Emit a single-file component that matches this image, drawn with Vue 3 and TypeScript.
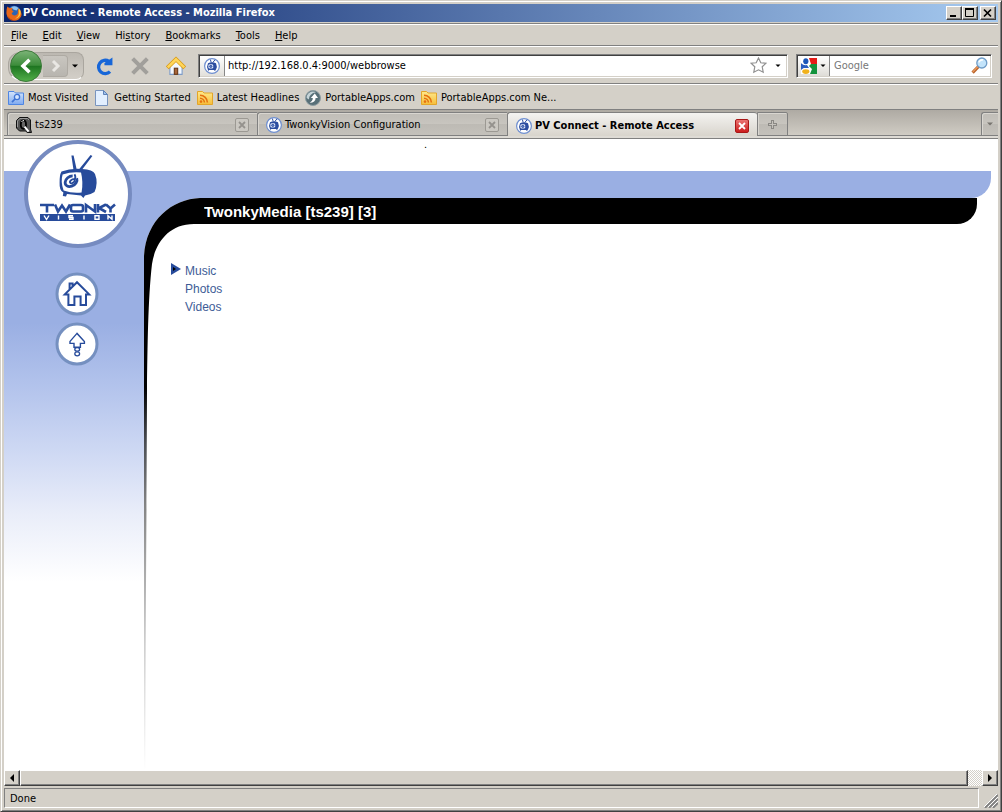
<script setup lang="ts">
import { ref } from 'vue'

interface MenuItem { before: string; key: string; after: string }
interface Bookmark { label: string; icon: string }
interface Tab { label: string; icon: string; active: boolean }

const menus: MenuItem[] = [
  { before: '', key: 'F', after: 'ile' },
  { before: '', key: 'E', after: 'dit' },
  { before: '', key: 'V', after: 'iew' },
  { before: 'Hi', key: 's', after: 'tory' },
  { before: '', key: 'B', after: 'ookmarks' },
  { before: '', key: 'T', after: 'ools' },
  { before: '', key: 'H', after: 'elp' },
]

const bookmarks: Bookmark[] = [
  { label: 'Most Visited', icon: 'i-smart' },
  { label: 'Getting Started', icon: 'i-page' },
  { label: 'Latest Headlines', icon: 'i-feed' },
  { label: 'PortableApps.com', icon: 'i-portable' },
  { label: 'PortableApps.com Ne...', icon: 'i-feed' },
]

const tabs: Tab[] = [
  { label: 'ts239', icon: 'i-qnap', active: false },
  { label: 'TwonkyVision Configuration', icon: 'i-tv', active: false },
  { label: 'PV Connect - Remote Access', icon: 'i-tv', active: true },
]

const entries: string[] = ['Music', 'Photos', 'Videos']

const address = ref('http://192.168.0.4:9000/webbrowse')
const query = ref('')
</script>

<template>
  <div class="window">
    <svg class="defs" aria-hidden="true">
      <defs>
        <linearGradient id="g-green" x1="0" y1="0" x2="0" y2="1">
          <stop offset="0" stop-color="#7cb478" />
          <stop offset="0.48" stop-color="#3c8c3a" />
          <stop offset="0.5" stop-color="#1d7420" />
          <stop offset="1" stop-color="#53b04a" />
        </linearGradient>
        <linearGradient id="g-folder" x1="0" y1="0" x2="0" y2="1">
          <stop offset="0" stop-color="#ffe98c" />
          <stop offset="1" stop-color="#f5bd3a" />
        </linearGradient>
        <linearGradient id="g-blue" x1="0" y1="0" x2="0" y2="1">
          <stop offset="0" stop-color="#d5e5fb" />
          <stop offset="1" stop-color="#7faaf0" />
        </linearGradient>
        <linearGradient id="g-fade" gradientUnits="userSpaceOnUse" x1="0" y1="0" x2="0" y2="572">
          <stop offset="0" stop-color="#000" />
          <stop offset="0.33" stop-color="#000" />
          <stop offset="0.43" stop-color="#4c4f54" />
          <stop offset="0.54" stop-color="#858585" />
          <stop offset="0.66" stop-color="#acacac" />
          <stop offset="0.78" stop-color="#cecece" />
          <stop offset="0.9" stop-color="#e8e8e8" />
          <stop offset="1" stop-color="#fff" />
        </linearGradient>
      </defs>
      <symbol id="i-tv" viewBox="0 0 16 16">
        <circle cx="8" cy="8" r="7.4" fill="#fff" stroke="#6f8fd0" stroke-width="1.2" />
        <path d="M7.2 4.5L6.4 1.6M8.8 4.5L11 1.8" stroke="#2c4da0" stroke-width="1" />
        <path d="M4 5.2Q8 3.4 12 5.2Q13.6 8.5 12 11.6L11 13L9.8 12H5.2L4.4 13L3.8 11.6Q2.4 8.5 4 5.2z" fill="#2c4da0" />
        <rect x="4.4" y="6.2" width="4.8" height="4.4" rx="1.4" fill="#dfe8fa" />
        <ellipse cx="6.8" cy="8.4" rx="1.2" ry="1" fill="#6f8fd0" stroke="#2c4da0" stroke-width="1" />
      </symbol>
      <symbol id="i-smart" viewBox="0 0 16 16">
        <path d="M.5 14.5V1.5H6L7.5 3H15.5V14.5z" fill="url(#g-blue)" stroke="#4f86e2" />
        <circle cx="9" cy="7" r="2.6" fill="#d5e6ff" stroke="#3f74d4" stroke-width="1.3" />
        <path d="M7 9L4 12.2" stroke="#3f74d4" stroke-width="1.7" />
      </symbol>
      <symbol id="i-page" viewBox="0 0 16 16">
        <path d="M1.5 .5H9.5L13.5 4.5V15.5H1.5z" fill="#e2efff" stroke="#7894be" />
        <path d="M9.5 .5V4.5H13.5z" fill="#9fc2ef" stroke="#5f83b8" />
      </symbol>
      <symbol id="i-feed" viewBox="0 0 16 16">
        <path d="M.5 14.5V1.5H5.5L7 3H15.5V14.5z" fill="url(#g-folder)" stroke="#e3a529" />
        <circle cx="4" cy="11.6" r="1.3" fill="#e56f10" />
        <path d="M3 8.2A4.4 4.4 0 0 1 7.4 12.6M3 5.2A7.4 7.4 0 0 1 10.4 12.6" fill="none" stroke="#e56f10" stroke-width="1.5" />
      </symbol>
      <symbol id="i-portable" viewBox="0 0 16 16">
        <circle cx="8" cy="8" r="7.5" fill="#587078" stroke="#8d9da2" />
        <path d="M1.6 8A6.4 6.4 0 0 1 11 2.2A8 8 0 0 0 5.6 5A6 6 0 0 0 4 9.6z" fill="#c6d4d8" />
        <path d="M4.6 12.8Q10.6 12.6 10.6 8H13L9.8 3.6L5.8 8H7.8Q7.8 11 4.6 12.8z" fill="#fff" />
      </symbol>
      <symbol id="i-qnap" viewBox="0 0 16 16">
        <path d="M3.5.5H12L14.5 3V12L15.5 15.5H11L9.8 14H3.5L.5 11V3.5z" fill="#555" stroke="#111" />
        <path d="M1.5 10V4L4 1.5H11.5L13 3" stroke="#999" fill="none" />
        <ellipse cx="7.4" cy="7.6" rx="2.6" ry="4.2" fill="#666" stroke="#000" stroke-width="1.8" />
        <path d="M8.6 9.6L12.6 14.6" stroke="#fff" stroke-width="1.9" />
        <path d="M5.4 5Q6.4 3.4 8 3.4" stroke="#ddd" fill="none" />
      </symbol>
    </svg>

    <header class="titlebar">
      <svg class="fox" viewBox="0 0 16 16" aria-hidden="true">
        <circle cx="8" cy="7.8" r="7" fill="#2c64b4" />
        <path d="M5 2.5Q9 0 12.5 3L10.5 5.5L7.4 4.6z" fill="#8fc3ef" />
        <path d="M1.4 1.6Q2.6 3 4 3.2Q5.4 2.6 6.6 3L5.8 5L7.6 6.4L5.6 8.2Q6.4 10.6 9 10.4Q12.4 9.6 11.8 6.2L12.6 3.2Q16.6 7 15.2 11.2Q12.8 15.8 8 15.8Q1.6 15.4.5 9Q.1 5 1.4 1.6z" fill="#e8681a" />
        <path d="M12.6 3.2Q15.2 5.4 14.6 9Q13.4 13.4 9 13.6Q13 11.6 12.9 8z" fill="#ffc43a" />
        <path d="M1.2 10Q4 15.6 9.4 15.4Q3.4 16.4 1.2 10z" fill="#9a2c10" />
      </svg>
      <h1>PV Connect - Remote Access - Mozilla Firefox</h1>
      <div class="winbtns">
        <button type="button" aria-label="Minimize"><svg viewBox="0 0 12 10"><path d="M2 8H8" stroke="#000" stroke-width="2" /></svg></button>
        <button type="button" aria-label="Maximize"><svg viewBox="0 0 12 10"><path d="M1.5 1V8.5H9.5V1" fill="none" stroke="#000" /><path d="M1 1H10" stroke="#000" stroke-width="2" /></svg></button>
        <button type="button" class="close" aria-label="Close"><svg viewBox="0 0 12 10"><path d="M2 1.5L9 8.5M9 1.5L2 8.5" stroke="#000" stroke-width="1.7" /></svg></button>
      </div>
    </header>

    <nav class="menubar" aria-label="Menu">
      <button v-for="m in menus" :key="m.key + m.after" type="button">{{ m.before }}<u>{{ m.key }}</u>{{ m.after }}</button>
    </nav>

    <div class="navbar">
      <div class="pill">
        <button type="button" class="back" aria-label="Back">
          <svg viewBox="0 0 34 34">
            <circle cx="17" cy="17" r="15.5" fill="url(#g-green)" stroke="#3d7a3b" />
            <path d="M20.5 10.8L14 17L20.5 23.2" fill="none" stroke="#fff" stroke-width="3.6" />
          </svg>
        </button>
        <button type="button" class="forward" aria-label="Forward">
          <svg viewBox="0 0 24 20"><path d="M10 5L15 10L10 15" fill="none" stroke="#e9e7e3" stroke-width="3" /></svg>
        </button>
        <button type="button" class="recent" aria-label="Recent pages">
          <svg viewBox="0 0 6 4"><path d="M0 .5H6L3 3.5z" /></svg>
        </button>
      </div>
      <button type="button" class="tool" aria-label="Reload">
        <svg viewBox="0 0 18 18"><path d="M14.4 14A6 6 0 1 1 13.4 4.8" fill="none" stroke="#1766d8" stroke-width="3" /><path d="M16.6 1.4V8.4H9.4V6.4z" fill="#1766d8" /></svg>
      </button>
      <button type="button" class="tool" aria-label="Stop">
        <svg viewBox="0 0 18 18"><path d="M2.4 2.4L15.6 15.6M15.6 2.4L2.4 15.6" stroke="#a19f9b" stroke-width="3.6" /></svg>
      </button>
      <button type="button" class="tool" aria-label="Home">
        <svg viewBox="0 0 18 18">
          <path d="M3.5 9V16.5H14.5V9L9 4z" fill="#f3f8ff" stroke="#7e9cc8" />
          <rect x="7.5" y="11" width="3" height="5.5" fill="#a8653a" stroke="#6b3b1a" />
          <path d="M1.2 10.6L9 3L16.8 10.6" fill="none" stroke="#d89a18" stroke-width="3.6" />
          <path d="M1.6 10.2L9 3L16.4 10.2" fill="none" stroke="#ffd65a" stroke-width="2.4" />
        </svg>
      </button>
      <div class="field url">
        <button type="button" class="ident" aria-label="Site identity"><svg class="i16"><use href="#i-tv" /></svg></button>
        <input v-model="address" type="text" aria-label="Location">
        <button type="button" class="star" aria-label="Bookmark this page">
          <svg viewBox="0 0 17 17"><path d="M8.5 1L10.8 5.8L16 6.2L12.2 9.8L13.2 15.2L8.5 12.8L3.8 15.2L4.8 9.8L1 6.2L6.2 5.8z" fill="#fff" stroke="#8f8f8f" stroke-width="1.2" /></svg>
        </button>
        <button type="button" class="drop" aria-label="Show history"><svg viewBox="0 0 6 4"><path d="M.5 .5H5.5L3 3z" /></svg></button>
      </div>
      <div class="field search">
        <button type="button" class="engine" aria-label="Search engine">
          <svg class="i16" viewBox="0 0 16 16">
            <rect width="16" height="16" fill="#fff" />
            <path d="M8 0H16V6H10z" fill="#e41b17" />
            <path d="M0 5L4 9L0 12z" fill="#2a5fc0" />
            <path d="M10 6H16V16H9L11 11L8 8z" fill="#12923c" />
            <ellipse cx="4.8" cy="3.2" rx="2.6" ry="3" fill="#1b57b8" />
            <ellipse cx="4.8" cy="13.6" rx="3.6" ry="2.4" fill="#f0b11c" />
            <path d="M0 6Q3 7.5 6 7L8 10H2z" fill="#2a5fc0" />
          </svg>
          <svg class="caret" viewBox="0 0 6 4"><path d="M.5 .5H5.5L3 3z" /></svg>
        </button>
        <input v-model="query" type="text" placeholder="Google" aria-label="Search">
        <button type="button" class="go" aria-label="Go">
          <svg viewBox="0 0 17 17">
            <path d="M8 9L1.6 15.6" stroke="#b8622a" stroke-width="3.2" />
            <path d="M7.4 9.2L1.8 14.8" stroke="#f0a060" stroke-width="1.2" />
            <circle cx="10.8" cy="6" r="5" fill="#c3e4fb" stroke="#6f9cc8" stroke-width="1.3" />
            <path d="M8 5.4A3.2 3.2 0 0 1 12 3" fill="none" stroke="#fff" stroke-width="1.6" />
          </svg>
        </button>
      </div>
    </div>

    <nav class="bookmarks" aria-label="Bookmarks">
      <a v-for="b in bookmarks" :key="b.label" href="#"><svg class="i16" aria-hidden="true"><use :href="'#' + b.icon" /></svg>{{ b.label }}</a>
    </nav>

    <div class="tabbar">
      <div v-for="t in tabs" :key="t.label" class="tab" :class="{ active: t.active }">
        <button type="button" class="label"><svg class="i16" aria-hidden="true"><use :href="'#' + t.icon" /></svg>{{ t.label }}</button>
        <button type="button" class="x" :aria-label="'Close ' + t.label"><svg viewBox="0 0 8 8"><path d="M1 1L7 7M7 1L1 7" stroke-width="1.8" /></svg></button>
      </div>
      <button type="button" class="tab plus" aria-label="New tab"><svg viewBox="0 0 9 9"><path d="M4.5 0V9M0 4.5H9" stroke="#8a8884" stroke-width="3" /><path d="M4.5 1V8M1 4.5H8" stroke="#c6c3bd" /></svg></button>
      <button type="button" class="tab all" aria-label="List all tabs"><svg viewBox="0 0 6 4"><path d="M0 .5H6L3 3.5z" fill="#77746f" /></svg></button>
    </div>

    <div class="page">
      <div class="strip">.</div>
      <div class="band"></div>
      <a class="logo" href="#" aria-label="Twonky Vision">
        <svg viewBox="0 0 108 108">
          <circle cx="54" cy="54" r="52" fill="#fff" stroke="#768bc0" stroke-width="4" />
          <path d="M49.5 30L47.4 15.5H49.6L52.8 30zM54.5 30L66.6 15L68.4 16L57.8 30z" fill="#274b9b" />
          <path d="M37.5 31.5Q47 28 58 29Q69 29.5 71 34Q74.5 43 70.5 52Q66 55 61 55.6L59.4 58L57 55.6L43 54L42 56.6L38.8 56L39.4 52.6Q35.2 50.5 35.6 43Q35.4 35 37.5 31.5z" fill="#274b9b" />
          <path d="M38.6 34.6Q47 31.4 57 32.4Q59.4 42 57.6 52.4Q48 53.4 39.6 50.4Q36.4 42 38.6 34.6z" fill="#fff" />
          <g transform="rotate(-35 47.5 42)" fill="none" stroke="#274b9b">
            <path d="M52 37.6A6.4 4.8 0 1 0 53.9 42" stroke-width="2.8" />
            <ellipse cx="48.6" cy="41.8" rx="2.6" ry="1.6" stroke-width="1.8" />
            <path d="M51.4 41.8Q54 41 54.4 37.4" stroke-width="1.8" />
          </g>
          <rect x="16" y="74" width="75" height="7" fill="#274b9b" />
          <g fill="none" stroke="#274b9b" stroke-width="2.6">
            <path d="M16 65H30M23 65V72.5M31 64.5L34 71.5L38 65.5L42 71.5L46 64.5M49 65H57Q59 65 59 67V69.5Q59 71.5 57 71.5H49Q47 71.5 47 69.5V67Q47 65 49 65zM62 72.5V65L71 71.5V64M74 64V72.5M82 64.5L75 68L82 72M82 64.5L86.5 68.5L91 64.5M86.5 68.5V72.5" />
            <path stroke="#fff" stroke-width="1.4" d="M20 75.5L22.5 79.5L25 75.5M34.5 75.5V79.5M49 75.7H45V77.5H49V79.3H45M60 75.5V79.5M71 75.7H75V79.3H71zM84 79.5V75.7L88 79.3V75.5" />
          </g>
        </svg>
      </a>
      <div class="body">
        <aside>
          <a href="#" aria-label="Home">
            <svg viewBox="0 0 44 44">
              <circle cx="22" cy="22" r="20" fill="#fff" stroke="#7590c0" stroke-width="3" />
              <path d="M9.8 22.4L22 10.2L34.2 22.4H31V33H25.6V24.6H19.4V33H13.4V22.4zM14.6 17V11.5H17.6V14.2" fill="#fff" stroke="#274b9b" stroke-width="2" />
            </svg>
          </a>
          <a href="#" aria-label="Up">
            <svg viewBox="0 0 44 44">
              <circle cx="22" cy="22" r="20" fill="#fff" stroke="#7590c0" stroke-width="3" />
              <path d="M22 11.4L15 19.4V21.4H19V25.2H25.4V21.4H29.4V19.4z" fill="#fff" stroke="#274b9b" stroke-width="1.4" />
              <ellipse cx="22.2" cy="27.4" rx="2.4" ry="1.7" fill="#fff" stroke="#274b9b" stroke-width="1.3" />
              <ellipse cx="22.2" cy="31.8" rx="2.4" ry="2" fill="#fff" stroke="#274b9b" stroke-width="1.3" />
            </svg>
          </a>
        </aside>
        <main>
          <svg class="swoosh" viewBox="0 0 60 572" aria-hidden="true">
            <path d="M0 0H56C28 1 2 22 0 58z" fill="#9aafe3" />
            <path d="M60 0H56C28 1 2 22 0 58V572H1.5C1.5 420 3 260 3 190C3.5 150 4 100 8 66C11 46 24 26 50 26H60z" fill="url(#g-fade)" />
          </svg>
          <h2>TwonkyMedia [ts239] [3]</h2>
          <ul>
            <li v-for="(e, i) in entries" :key="e">
              <svg v-if="i === 0" viewBox="0 0 10 12" aria-hidden="true"><path d="M0 0L10 6L0 12z" fill="#274b9b" /><path d="M2 4L5 6L2 8z" fill="#000" /></svg>
              <a href="#">{{ e }}</a>
            </li>
          </ul>
        </main>
      </div>
    </div>

    <div class="hscroll">
      <button type="button" aria-label="Scroll left"><svg viewBox="0 0 4 8"><path d="M4 0V8L0 4z" /></svg></button>
      <div class="thumb"></div>
      <div class="track"></div>
      <button type="button" aria-label="Scroll right"><svg viewBox="0 0 4 8"><path d="M0 0V8L4 4z" /></svg></button>
    </div>

    <footer class="status">
      <span>Done</span>
      <svg viewBox="0 0 14 14" aria-hidden="true"><path d="M1 14L14 1M5 14L14 5M9 14L14 9" stroke="#808080" stroke-width="1.8" /><path d="M0 13L13 0M4 13L14 3M8 13L14 7" stroke="#fff" /></svg>
    </footer>
  </div>
</template>

<style>
html, body { height: 100%; margin: 0; overflow: hidden; }
</style>

<style scoped>
* { box-sizing: border-box; }
button, input { font: inherit; color: inherit; border: 0; padding: 0; margin: 0; background: none; outline: 0; }
svg { display: block; }
a { text-decoration: none; color: inherit; }
.defs { position: absolute; width: 0; height: 0; }
.i16 { width: 16px; height: 16px; flex: none; }

.window {
  display: flex;
  flex-direction: column;
  height: 100vh;
  padding: 3px;
  border: 1px solid;
  border-color: #d4d0c8 #404040 #404040 #d4d0c8;
  box-shadow: inset 1px 1px #fff, inset -1px -1px #808080;
  background: #d4d0c8;
  color: #000;
  font-family: "DejaVu Sans Condensed", "DejaVu Sans", sans-serif;
  font-size: 11px;
  line-height: 14px;
}

.titlebar {
  display: flex;
  align-items: center;
  flex: none;
  height: 18px;
  padding: 0 2px;
  background: linear-gradient(90deg, #0a246a, #a6caf0);
  color: #fff;
}
.fox { width: 16px; height: 16px; }
.titlebar h1 { flex: 1; margin: 0 0 0 1px; font-size: 11px; font-weight: bold; }
.winbtns { display: flex; }
.winbtns button { width: 16px; height: 14px; padding: 1px; }
.winbtns svg { width: 12px; height: 10px; }
.winbtns .close { margin-left: 2px; }
.winbtns button, .hscroll button, .thumb {
  background: #d4d0c8;
  border: 1px solid;
  border-color: #fff #404040 #404040 #fff;
  box-shadow: inset -1px -1px #808080;
}

.menubar {
  display: flex;
  align-items: center;
  flex: none;
  gap: 15px;
  height: 23px;
  margin-top: 1px;
  padding: 2px 7px 0;
  border-top: 1px solid #808080;
  border-bottom: 1px solid #808080;
  box-shadow: inset 0 1px #fff;
}

.navbar {
  display: flex;
  align-items: center;
  flex: none;
  height: 38px;
  padding: 2px 6px 0 4px;
  border-bottom: 1px solid #808080;
  box-shadow: inset 0 1px #fff;
}
.pill {
  display: flex;
  align-items: center;
  width: 76px;
  height: 28px;
  margin-right: 10px;
  border: 1px solid #aaa69f;
  border-bottom-color: #fff;
  border-radius: 12px 8px 8px 12px;
  background: linear-gradient(#bcb8b1, #d3cfc8);
}
.back { width: 34px; height: 34px; flex: none; }
.back svg { width: 34px; height: 34px; }
.forward { width: 25px; height: 22px; border: 1px solid #aeaaa3; border-left: 0; border-radius: 0 4px 4px 0; background: linear-gradient(#c9c6c0, #b8b5af); }
.forward svg { width: 24px; height: 20px; }
.recent { padding: 8px 4px; }
.recent svg { width: 6px; height: 4px; }
.tool { width: 20px; height: 20px; margin-right: 16px; }
.tool svg { width: 20px; height: 20px; }
.field {
  display: flex;
  align-items: center;
  height: 24px;
  padding: 1px;
  background: #fff;
  border: 1px solid;
  border-color: #808080 #fff #fff #808080;
  box-shadow: inset 1px 1px #404040, inset -1px -1px #d4d0c8;
}
.field input { flex: 1; min-width: 0; height: 20px; padding: 0 4px; }
.field input::placeholder { color: #777; opacity: 1; }
.url { flex: 1; margin-left: -4px; }
.ident { display: grid; place-items: center; width: 25px; height: 20px; border-right: 1px solid #888; background: linear-gradient(#fff, #e2e0db); }
.url input { padding-left: 3px; }
.star svg { width: 17px; height: 17px; }
.drop { margin-left: 3px; padding: 6px 5px; }
.drop svg, .caret { width: 6px; height: 4px; }
.search { flex: 0 1 196px; margin-left: 8px; }
.engine { display: flex; align-items: center; gap: 3px; height: 20px; padding: 0 3px; border-right: 1px solid #888; background: linear-gradient(#fff, #dedcd7); }
.go { margin-right: 2px; }
.go svg { width: 17px; height: 17px; }

.bookmarks {
  display: flex;
  align-items: center;
  flex: none;
  gap: 6px;
  height: 26px;
  padding: 2px 4px 0;
  border-bottom: 1px solid #808080;
  box-shadow: inset 0 1px #fff;
}
.bookmarks a { display: flex; align-items: center; gap: 4px; white-space: nowrap; }

.tabbar {
  display: flex;
  align-items: flex-end;
  flex: none;
  height: 29px;
  padding: 3px 0 2px 3px;
  border-bottom: 1px solid #808080;
  background: linear-gradient(#aeaaa3, #d0ccc4 25px, #808080 25px, #808080 26px, #dedbd5 26px);
}
.tab {
  display: flex;
  align-items: center;
  width: 250px;
  height: 24px;
  padding: 2px 8px 0;
  border: 1px solid #808080;
  border-right-width: 0;
  border-radius: 3px 0 0 0;
  background: linear-gradient(#c0bdb7, #c8c5bf 50%, #bdbab4 50%, #c4c1bb);
  box-shadow: inset 1px 1px #d9d6d0;
}
.tab.active { border-bottom: 0; background: linear-gradient(#f4f3f1, #d8d4cc); font-weight: bold; box-shadow: none; border-radius: 3px 3px 0 0; }
.label { display: flex; align-items: center; flex: 1; gap: 3px; white-space: nowrap; }
.x { width: 14px; height: 14px; padding: 2px; border: 1px solid #9c9993; border-radius: 2px; background: #cbc8c2; }
.x svg { width: 8px; height: 8px; stroke: #95928d; }
.active .x { border-color: #a81717; background: linear-gradient(#ea7371, #cc1c1c); }
.active .x svg { stroke: #fff; }
.plus { width: 31px; padding: 0 10px; border-right-width: 1px; border-radius: 0 2px 0 0; }
.plus svg { width: 9px; height: 9px; }
.all { width: 17px; padding: 0 5px; margin-left: auto; border-right: 0; }
.all svg { width: 6px; height: 4px; }

.page {
  position: relative;
  display: flex;
  flex-direction: column;
  flex: 1;
  min-height: 0;
  overflow: hidden;
  background: #fff;
  font-family: "Liberation Sans", Arial, sans-serif;
}
.strip { flex: none; height: 32px; padding-left: 420px; font-size: 11px; line-height: 10px; }
.band { flex: none; height: 27px; margin-right: 7px; border-radius: 0 0 20px 0; background: #9aafe3; }
.logo { position: absolute; left: 20px; top: 1px; width: 108px; height: 108px; }
.logo svg { width: 108px; height: 108px; }
.body { display: flex; flex: 1; min-height: 0; }
aside {
  display: flex;
  flex-direction: column;
  align-items: center;
  gap: 6px;
  width: 140px;
  flex: none;
  padding: 74px 0 0 5px;
  background: linear-gradient(#9aafe3 125px, #b0c1eb 182px, #d0daf4 258px, #e9edf9 315px, #fff 384px);
}
aside svg { width: 44px; height: 44px; }
main { position: relative; flex: 1; min-width: 0; padding-right: 21px; }
.swoosh { position: absolute; left: 0; top: 0; width: 60px; height: 572px; }
h2 { margin: 0 0 0 60px; height: 26px; border-radius: 0 0 20px 0; background: #000; color: #fff; font-size: 15px; font-weight: bold; line-height: 28px; }
ul { list-style: none; margin: 38px 0 0 27px; padding: 0; }
li { display: grid; grid-template-columns: 14px auto; height: 18px; color: #3e5c96; font-size: 12px; line-height: 18px; }
li svg { width: 10px; height: 12px; margin-top: 1px; }
li a { grid-column: 2; }

.hscroll { display: flex; flex: none; height: 16px; }
.hscroll button { display: grid; place-items: center; width: 16px; }
.hscroll svg { width: 4px; height: 8px; }
.thumb { flex: 1; }
.track { width: 14px; background: repeating-conic-gradient(#fff 0 25%, #d4d0c8 0 50%) 0 0 / 2px 2px; }

.status { display: flex; flex: none; height: 22px; padding-top: 2px; }
.status span { flex: 1; height: 20px; padding: 3px 5px 1px; border: 1px solid; border-color: #808080 #fff #fff #808080; }
.status svg { width: 14px; height: 14px; margin: 6px 0 0 5px; }
</style>
